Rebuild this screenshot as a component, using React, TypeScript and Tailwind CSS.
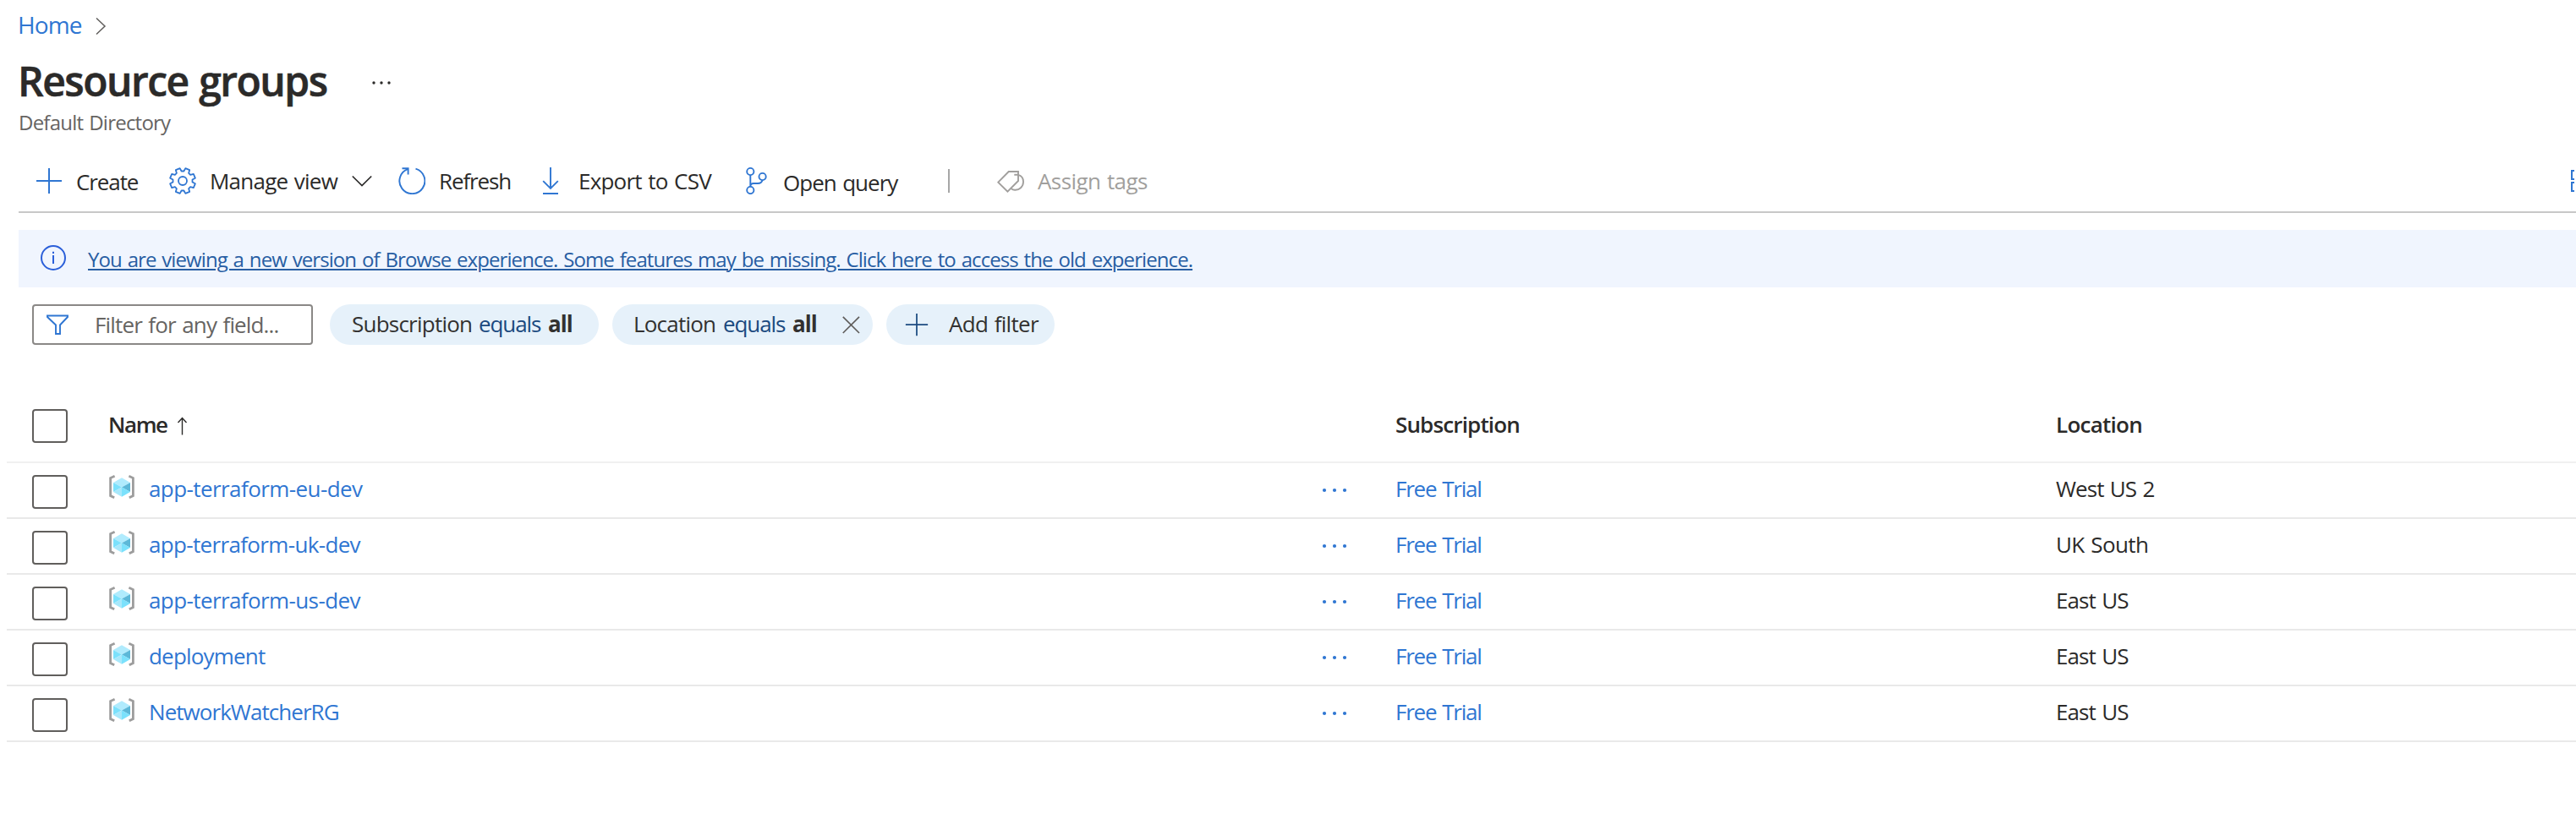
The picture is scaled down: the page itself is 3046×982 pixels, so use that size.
import React from 'react';

type Row = { name: string; location: string; nameTracking: string; locTracking: string };

const rows: Row[] = [
  { name: 'app-terraform-eu-dev', location: 'West US 2', nameTracking: 'tracking-[-0.58px]', locTracking: 'tracking-[-0.95px] pl-px' },
  { name: 'app-terraform-uk-dev', location: 'UK South', nameTracking: 'tracking-[-0.66px]', locTracking: 'tracking-[-0.6px] pl-px' },
  { name: 'app-terraform-us-dev', location: 'East US', nameTracking: 'tracking-[-0.6px]', locTracking: 'tracking-[-0.9px] pl-px' },
  { name: 'deployment', location: 'East US', nameTracking: 'tracking-[-0.81px]', locTracking: 'tracking-[-0.9px] pl-px' },
  { name: 'NetworkWatcherRG', location: 'East US', nameTracking: 'tracking-[-0.95px]', locTracking: 'tracking-[-0.9px] pl-px' },
];

const gearPath =
  Array.from({ length: 8 }, (_, k) => {
    const base = k * 45;
    const points: [number, number][] = [
      [base - 7, 11.6],
      [base + 7, 11.6],
      [base + 12.5, 15.2],
      [base + 32.5, 15.2],
    ];
    return points
      .map(([deg, r]) => {
        const a = ((deg - 90) * Math.PI) / 180;
        return `${(16 + r * Math.cos(a)).toFixed(2)} ${(16 + r * Math.sin(a)).toFixed(2)}`;
      })
      .join('L');
  }).join('L');

function Plus({ className }: { className: string }) {
  return (
    <svg viewBox="0 0 32 32" className={className} fill="none" strokeWidth="2">
      <path d="M16 1V31M1 16H31" />
    </svg>
  );
}

function GearIcon() {
  return (
    <svg viewBox="0 0 32 32" className="ml-[30px] size-8 shrink-0 stroke-[#2f76d2]" fill="none" strokeWidth="1.8" strokeLinejoin="round">
      <path d={`M${gearPath}Z`} />
      <circle cx="16" cy="16" r="5" />
    </svg>
  );
}

function RefreshIcon() {
  return (
    <svg viewBox="0 0 32 32" className="ml-[31px] size-8 shrink-0 stroke-[#2f76d2]" fill="none" strokeWidth="1.9">
      <path d="M20.5 1.7A15 15 0 1 1 11.6 1.9" />
      <path d="M4.5 1.2H11.6V8.5" />
    </svg>
  );
}

function DownloadIcon() {
  return (
    <svg viewBox="0 0 32 32" className="ml-[26px] size-8 shrink-0 stroke-[#2f76d2]" fill="none" strokeWidth="1.9">
      <path d="M16 0V25M7.2 16.2L16 25L24.8 16.2M7 31H25" />
    </svg>
  );
}

function BranchIcon() {
  return (
    <svg viewBox="0 0 32 32" className="ml-[29px] size-8 shrink-0 stroke-[#2f76d2]" fill="none" strokeWidth="1.9">
      <circle cx="8.3" cy="5" r="4.1" />
      <circle cx="22.6" cy="11" r="4.1" />
      <circle cx="8.3" cy="27" r="4.1" />
      <path d="M8.3 9V23M8.3 22C8.5 20 9.5 19 12 19H17C20 19 22 17.5 22.5 15" />
    </svg>
  );
}

function TagIcon() {
  return (
    <svg viewBox="0 0 32 32" className="ml-14 size-8 shrink-0 stroke-[#a19f9d]" fill="none" strokeWidth="1.9">
      <path d="M1.3 17.7L13.7 5H25V16L12.4 28.6Z" />
      <path d="M20.3 8.8H25C29 10 31.2 13.6 31 17.5C30.8 23 26.5 27 21 26.7C19.3 26.6 18 26.1 16.7 25.2" />
    </svg>
  );
}

function ResourceGroupIcon() {
  return (
    <svg viewBox="0 0 30 28" className="h-7 w-[30px] shrink-0">
      <path d="M6.6 1.3L1.6 3.6V24.6L6.2 26.8M23.4 1.3L28.4 3.6V24.6L23.8 26.8" fill="none" stroke="#9d9d9d" strokeWidth="2.8" />
      <path d="M5 9L15 3.3L25 9L15 14.4Z" fill="#b0ebfd" />
      <path d="M5 9L15 14.4L5 20Z" fill="#7be1fc" />
      <path d="M5 20L15 14.4V25.7Z" fill="#a8e8fb" />
      <path d="M25 9V20L15 14.4Z" fill="#5db8d8" />
      <path d="M15 14.4L25 20L15 25.7Z" fill="#7be1fc" />
    </svg>
  );
}

function Checkbox() {
  return <div className="ml-[30px] h-10 w-[42px] rounded-[4px] border-2 border-[#605e5c]" />;
}

export default function App() {
  return (
    <div className="flex h-[982px] w-[3046px] flex-col overflow-hidden bg-white font-['Open_Sans',sans-serif] text-[26px] leading-8 whitespace-nowrap text-[#2b2a29] [word-spacing:1.5px]">
      <nav className="flex h-[58px] items-center pl-[21px] text-[28px]">
        <a className="w-[82px] tracking-[-0.9px] text-[#2f76d2]">Home</a>
        <svg viewBox="0 0 14 24" className="ml-[9px] mt-1 h-6 w-[14px]" fill="none" stroke="#605e5c" strokeWidth="1.5">
          <path d="M2 2.5L12 12L2 21.5" />
        </svg>
      </nav>

      <header className="flex h-[74px] items-center pl-[21px]">
        <h1 className="w-[380px] pt-0.5 text-[48px] leading-[64px] font-semibold tracking-[-1.5px] [-webkit-text-stroke:0.6px_#2b2a29]">Resource groups</h1>
        <svg viewBox="0 0 28 8" className="ml-[37px] mt-1.5 h-2 w-7" fill="#2b2a29">
          <circle cx="4" cy="4" r="1.7" />
          <circle cx="13" cy="4" r="1.7" />
          <circle cx="22" cy="4" r="1.7" />
        </svg>
      </header>
      <div className="h-[26px] pl-[22px] text-[24px] leading-[26px] tracking-[-0.77px] text-[#666462]">Default Directory</div>

      <div className="ml-[22px] flex h-[94px] items-center border-b-2 border-[#c8c8c8] pt-5">
        <Plus className="ml-5 size-8 shrink-0 stroke-[#2f76d2]" />
        <span className="ml-4 w-20 pt-0.5 tracking-[-1.1px]">Create</span>
        <GearIcon />
        <span className="ml-4 w-[158px] tracking-[-0.77px]">Manage view</span>
        <svg viewBox="0 0 24 14" className="ml-[10px] h-[14px] w-6" fill="none" stroke="#2b2a29" strokeWidth="1.7">
          <path d="M0.8 1.5L12 12.5L23.2 1.5" />
        </svg>
        <RefreshIcon />
        <span className="ml-4 w-[90px] tracking-[-1.12px]">Refresh</span>
        <DownloadIcon />
        <span className="ml-[17px] w-[166px] tracking-[-0.78px]">Export to CSV</span>
        <BranchIcon />
        <span className="ml-[15px] w-[146px] pt-1 tracking-[-0.96px]">Open query</span>
        <div className="ml-[49px] h-7 w-0.5 bg-[#a6a6a6]" />
        <TagIcon />
        <span className="ml-[16px] tracking-[-0.6px] text-[#a19f9d]">Assign tags</span>
        <svg viewBox="0 0 7 28" className="mr-0 ml-auto h-7 w-[7px]" fill="none" stroke="#2f76d2" strokeWidth="2">
          <path d="M5 2H2V12H5M5 16H2V26H5" />
        </svg>
      </div>

      <div className="mt-5 ml-[22px] flex h-[68px] items-center bg-[#f0f5fe] pl-[26px]">
        <svg viewBox="0 0 32 32" className="-ml-px -mt-0.5 size-8 shrink-0" fill="none" stroke="#2b5fd9" strokeWidth="2">
          <circle cx="16" cy="16" r="14" />
          <path d="M16 13V23M16 8.8V11" />
        </svg>
        <a className="ml-[25px] pt-px text-[24px] tracking-[-0.92px] text-[#285ea3] underline decoration-2 underline-offset-[2px]">
          You are viewing a new version of Browse experience. Some features may be missing. Click here to access the old experience.
        </a>
      </div>

      <div className="mt-5 ml-[38px] flex h-12 items-center">
        <div className="flex h-12 w-[332px] items-center rounded-[4px] border-2 border-[#8a8886]">
          <svg viewBox="0 0 28 26" className="ml-[14px] h-[26px] w-7 shrink-0" fill="none" stroke="#2f76d2" strokeWidth="1.9">
            <path d="M2 2.5H26V4L17 13.5V24H12V13.5L2 4Z" />
          </svg>
          <span className="ml-[30px] tracking-[-0.85px] text-[#666462]">Filter for any field...</span>
        </div>
        <div className="ml-5 flex h-12 w-[318px] items-center rounded-full bg-[#e6f1fa] pb-0.5 pl-[26px]">
          <span className="w-[150px] tracking-[-0.77px] text-[#323130]">Subscription</span>
          <span className="w-[82px] tracking-[-1.1px] text-[#1b4a80]">equals</span>
          <span className="font-bold tracking-[-0.97px] text-[#323130]">all</span>
        </div>
        <div className="ml-4 flex h-12 w-[308px] items-center rounded-full bg-[#e6f1fa] pl-[25px]">
          <span className="w-[106px] pb-0.5 tracking-[-0.8px] text-[#323130]">Location</span>
          <span className="w-[82px] pb-0.5 tracking-[-1.1px] text-[#1b4a80]">equals</span>
          <span className="w-[57px] pb-0.5 font-bold tracking-[-0.97px] text-[#323130]">all</span>
          <svg viewBox="0 0 24 24" className="size-6" fill="none" stroke="#605e5c" strokeWidth="1.7">
            <path d="M2.8 2.8L22 22M22 2.8L2.8 22" />
          </svg>
        </div>
        <div className="ml-4 flex h-12 w-[199px] items-center rounded-full bg-[#e6f1fa] pl-[22px]">
          <Plus className="size-7 stroke-[#1b4a80]" />
          <span className="ml-[24px] pb-0.5 tracking-[-0.7px] text-[#323130]">Add filter</span>
        </div>
      </div>

      <div className="mt-[54px] ml-2">
        <div className="grid h-[86px] grid-cols-[119px_1433px_89px_781px_1fr] items-center border-b-2 border-[#f0f0f0] font-semibold">
          <Checkbox />
          <div className="flex items-center pb-1 pl-px">
            <span className="w-[79px] tracking-[-1.4px]">Name</span>
            <svg viewBox="0 0 14 22" className="ml-px mt-1 h-[22px] w-[14px]" fill="none" stroke="#2b2a29" strokeWidth="1.4">
              <path d="M7.5 21.5V1.5M2.5 7L7.5 1.5L12.5 7" />
            </svg>
          </div>
          <span />
          <span className="pb-1 pl-px tracking-[-0.85px]">Subscription</span>
          <span className="pb-1 pl-px tracking-[-0.75px]">Location</span>
        </div>
        {rows.map((row) => (
          <div key={row.name} className="grid h-[66px] grid-cols-[119px_1433px_89px_781px_1fr] items-center border-b-2 border-[#e9e9e9]">
            <div className="pt-1">
              <Checkbox />
            </div>
            <div className="flex items-center pb-1 pl-[2px]">
              <div className="pb-1">
                <ResourceGroupIcon />
              </div>
              <a className={`ml-[17px] text-[#2f76d2] ${row.nameTracking}`}>{row.name}</a>
            </div>
            <svg viewBox="0 0 36 8" className="h-2 w-9" fill="#2f76d2">
              <circle cx="6" cy="4" r="2.1" />
              <circle cx="18" cy="4" r="2.1" />
              <circle cx="30" cy="4" r="2.1" />
            </svg>
            <a className="pb-1 pl-px tracking-[-1.25px] text-[#2f76d2]">Free Trial</a>
            <span className={`pb-1 ${row.locTracking}`}>{row.location}</span>
          </div>
        ))}
      </div>
    </div>
  );
}
